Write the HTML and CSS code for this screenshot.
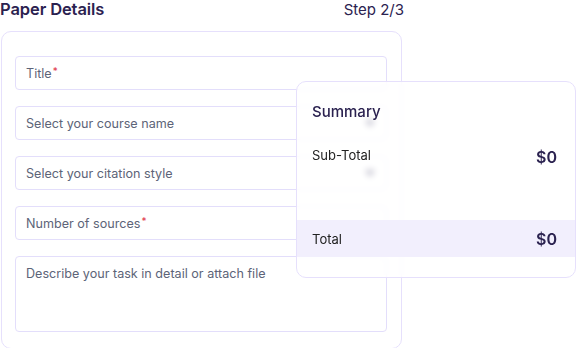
FILE: index.html
```html
<!DOCTYPE html>
<html lang="en">
<head>
    <meta charset="UTF-8">
    <meta name="viewport" content="width=device-width, initial-scale=1.0">
    <title>Paper Details</title>
    <link rel="stylesheet" href="styles.css">
</head>
<body>
    <div class="page">
        <div class="header">
            <h2>Paper Details</h2>
            <span class="step">Step 2/3</span>
        </div>
        <div class="form-card">
            <div class="field">Title<span class="req">*</span></div>
            <div class="field select">Select your course name
                <svg width="10" height="7" viewBox="0 0 10 7"><path d="M0 0h10L5 7z" fill="#3f3a66"/></svg>
            </div>
            <div class="field select">Select your citation style
                <svg width="10" height="7" viewBox="0 0 10 7"><path d="M0 0h10L5 7z" fill="#3f3a66"/></svg>
            </div>
            <div class="field">Number of sources<span class="req">*</span></div>
            <div class="field area">Describe your task in detail or attach file</div>
        </div>

        <div class="summary">
            <h3>Summary</h3>
            <div class="row sub">
                <span>Sub-Total</span>
                <span class="amount">$0</span>
            </div>
            <div class="row total">
                <span>Total</span>
                <span class="amount">$0</span>
            </div>
        </div>
    </div>
</body>
</html>
```

FILE: styles.css
```css
body { margin: 0; font-family: Inter, "Noto Sans", sans-serif; background: #fff; color: #2b2250; }
.page { position: relative; width: 576px; height: 349px; }
.header { width: 404px; display: flex; justify-content: space-between; align-items: center; height: 20px; margin-top: -1px; }
.header h2 { margin: 0; font-size: 16.5px; font-weight: 600; color: #2b2250; letter-spacing: -0.1px; }
.step { font-size: 15px; font-weight: 400; color: #2b2250; }
.form-card { margin: 12px 0 0 1px; width: 401px; height: 318px; border: 1px solid #e6e0fc; border-radius: 10px; box-sizing: border-box; padding: 24px 14px 0 13px; display: flex; flex-direction: column; gap: 16px; }
.field { height: 34px; border: 1px solid #e3defb; border-radius: 4px; box-sizing: border-box; padding: 0 11px 0 10px; display: flex; align-items: center; font-size: 12.6px; color: #5d6478; }
.field.select { justify-content: space-between; }
.field.area { height: 76px; align-items: flex-start; padding-top: 9px; }
.req { color: #e0364a; font-size: 10px; align-self: flex-start; margin-top: 8px; margin-left: 1px; }
.summary { position: absolute; left: 296px; top: 82px; width: 280px; height: 197px; box-sizing: border-box; border: 1px solid #e6e0fc; border-radius: 10px; background: rgba(255, 255, 255, 0.68); backdrop-filter: blur(3px); }
.summary h3 { margin: 20px 0 0 15px; font-size: 15px; font-weight: 500; color: #2b2250; }
.row { display: flex; justify-content: space-between; align-items: center; padding: 0 18px 0 15px; font-size: 13px; color: #222; }
.row.sub { margin-top: 26px; align-items: flex-start; height: 73px; }
.row.total { height: 37px; background: rgba(240, 236, 253, 0.85); }
.amount { font-size: 16px; font-weight: 600; color: #2b2250; }
```
